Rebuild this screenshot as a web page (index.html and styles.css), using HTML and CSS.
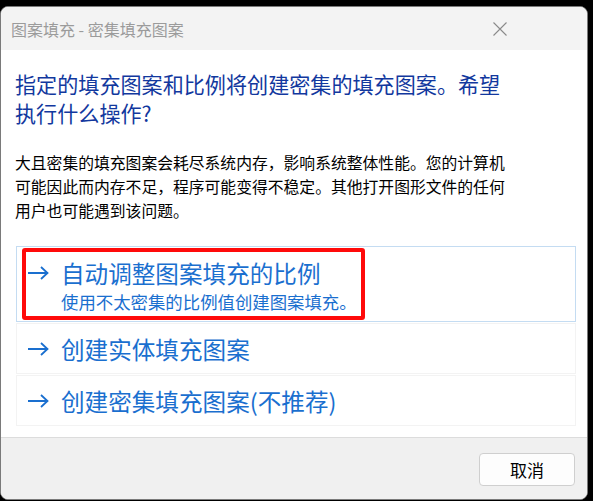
FILE: index.html
```html
<!DOCTYPE html>
<html lang="zh-CN">
<head>
<meta charset="utf-8">
<title>图案填充 - 密集填充图案</title>
<link rel="stylesheet" href="styles.css">
</head>
<body>
<div class="dialog">
  <div class="titlebar">
    <span class="title">图案填充 - 密集填充图案</span>
    <svg class="close" width="14" height="14" viewBox="0 0 14 14"><path d="M0.5 0.5 L13.5 13.5 M13.5 0.5 L0.5 13.5" stroke="#8a8a8a" stroke-width="1.1" fill="none"/></svg>
  </div>
  <div class="content">
    <h1 class="heading">指定的填充图案和比例将创建密集的填充图案。希望<br>执行什么操作?</h1>
    <p class="desc">大且密集的填充图案会耗尽系统内存，影响系统整体性能。您的计算机<br>可能因此而内存不足，程序可能变得不稳定。其他打开图形文件的任何<br>用户也可能遇到该问题。</p>
    <div class="options">
      <div class="option option-active">
        <svg class="arrow" width="22" height="14" viewBox="0 0 22 14"><path d="M1 7 H20 M14 1 L20.5 7 L14 13" stroke="#1a6fcf" stroke-width="1.8" fill="none"/></svg>
        <div class="option-text">
          <div class="option-title">自动调整图案填充的比例</div>
          <div class="option-sub">使用不太密集的比例值创建图案填充。</div>
        </div>
        <div class="highlight"></div>
      </div>
      <div class="option">
        <svg class="arrow" width="22" height="14" viewBox="0 0 22 14"><path d="M1 7 H20 M14 1 L20.5 7 L14 13" stroke="#1a6fcf" stroke-width="1.8" fill="none"/></svg>
        <div class="option-text">
          <div class="option-title">创建实体填充图案</div>
        </div>
      </div>
      <div class="option">
        <svg class="arrow" width="22" height="14" viewBox="0 0 22 14"><path d="M1 7 H20 M14 1 L20.5 7 L14 13" stroke="#1a6fcf" stroke-width="1.8" fill="none"/></svg>
        <div class="option-text">
          <div class="option-title">创建密集填充图案(不推荐)</div>
        </div>
      </div>
    </div>
  </div>
  <div class="footer">
    <button class="btn">取消</button>
  </div>
</div>
</body>
</html>
```

FILE: styles.css
```css
html, body {
  margin: 0;
  padding: 0;
  background: #000;
}
body {
  font-family: "Microsoft YaHei", "Noto Sans CJK SC", "Noto Sans", sans-serif;
  padding-top: 6px;
}
.dialog {
  box-sizing: border-box;
  width: 588px;
  height: 494px;
  background: #fff;
  border: 1px solid #7a7a7a;
  border-radius: 8px;
  overflow: hidden;
  display: flex;
  flex-direction: column;
}
.titlebar {
  height: 43px;
  flex: none;
  background: #f3f3f3;
  display: flex;
  align-items: center;
  justify-content: space-between;
  padding: 0 80px 0 10px;
}
.title {
  font-size: 16px;
  color: #9b9b9b;
  line-height: 20px;
}
.close {
  display: block;
}
.content {
  flex: 1;
  padding: 20px 10px 0 14px;
}
.heading {
  margin: 0;
  font-weight: normal;
  font-size: 21.1px;
  line-height: 29px;
  color: #12389e;
}
.desc {
  margin: 23px 0 0;
  font-size: 15.8px;
  line-height: 24px;
  color: #000;
}
.options {
  margin: 23px 0 0 1px;
  width: 560px;
  display: flex;
  flex-direction: column;
  gap: 1px;
}
.option {
  position: relative;
  box-sizing: border-box;
  height: 51px;
  border: 1px solid #f3f3f3;
  display: flex;
  align-items: center;
  padding-left: 10px;
}
.option-active {
  height: 76px;
  border-color: #c4dcf2;
  align-items: flex-start;
  padding-top: 12px;
}
.option-active .arrow {
  margin-top: 7px;
}
.arrow {
  display: block;
  flex: none;
  margin-right: 12px;
}
.option-title {
  font-size: 23.6px;
  line-height: 28px;
  color: #1a6fcf;
}
.option-sub {
  margin-top: 4px;
  font-size: 17.4px;
  line-height: 22px;
  color: #1a6fcf;
}
.highlight {
  position: absolute;
  left: 5px;
  top: 1px;
  width: 343px;
  height: 72px;
  box-sizing: border-box;
  border: 4px solid #ff0a0a;
  border-radius: 3px;
}
.footer {
  flex: none;
  box-sizing: border-box;
  height: 62px;
  background: #f0f0f0;
  border-top: 1px solid #dcdcdc;
  display: flex;
  justify-content: flex-end;
  align-items: flex-start;
  padding: 15px 12px 0 0;
}
.btn {
  width: 96px;
  height: 33px;
  background: #fdfdfd;
  border: 1px solid #cfcfcf;
  border-radius: 4px;
  font-family: inherit;
  font-size: 17px;
  color: #000;
  padding: 0;
}
```
